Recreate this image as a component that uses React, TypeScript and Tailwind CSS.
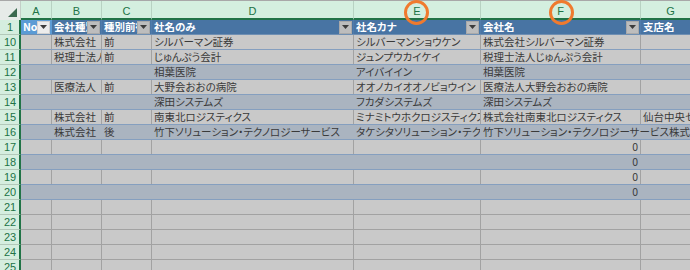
const FONT = "font-['Noto_Sans_CJK_JP','Noto_Sans',sans-serif] [font-feature-settings:'palt']";

type RowKind = 'light' | 'band' | 'plain'

interface IRow {
    n: string
    kind: RowKind
    cells: string[]
}

const W = ['w-[31px]', 'w-[50px]', 'w-[50px]', 'w-[202px]', 'w-[127px]', 'w-[160px]', 'w-[60px]']
const LETTERS = ['A', 'B', 'C', 'D', 'E', 'F', 'G']

const rows: IRow[] = [
    {n: '10', kind: 'light', cells: ['', '株式会社', '前', 'シルバーマン証券', 'シルバーマンショウケン', '株式会社シルバーマン証券', '']},
    {n: '11', kind: 'light', cells: ['', '税理士法人', '前', 'じゅんぷう会計', 'ジュンプウカイケイ', '税理士法人じゅんぷう会計', '']},
    {n: '12', kind: 'band', cells: ['', '', '', '相葉医院', 'アイバイイン', '相葉医院', '']},
    {n: '13', kind: 'light', cells: ['', '医療法人', '前', '大野会おおの病院', 'オオノカイオオノビョウイン', '医療法人大野会おおの病院', '']},
    {n: '14', kind: 'band', cells: ['', '', '', '深田システムズ', 'フカダシステムズ', '深田システムズ', '']},
    {n: '15', kind: 'light', cells: ['', '株式会社', '前', '南東北ロジスティクス', 'ミナミトウホクロジスティクス', '株式会社南東北ロジスティクス', '仙台中央センター']},
    {n: '16', kind: 'band', cells: ['', '株式会社', '後', '竹下ソリューション・テクノロジーサービス', 'タケシタソリューション・テクノロジーサービス', '竹下ソリューション・テクノロジーサービス株式会社', '']},
    {n: '17', kind: 'light', cells: ['', '', '', '', '', '0', '']},
    {n: '18', kind: 'band', cells: ['', '', '', '', '', '0', '']},
    {n: '19', kind: 'light', cells: ['', '', '', '', '', '0', '']},
    {n: '20', kind: 'band', cells: ['', '', '', '', '', '0', '']},
    {n: '21', kind: 'plain', cells: ['', '', '', '', '', '', '']},
    {n: '22', kind: 'plain', cells: ['', '', '', '', '', '', '']},
    {n: '23', kind: 'plain', cells: ['', '', '', '', '', '', '']},
    {n: '24', kind: 'plain', cells: ['', '', '', '', '', '', '']},
    {n: '25', kind: 'plain', cells: ['', '', '', '', '', '', '']},
]

const headers = ['No', '会社種別', '種別前後', '社名のみ', '社名カナ', '会社名', '支店名']

const rowStyle: Record<RowKind, string> = {
    light: 'bg-[#c9c9c9] border-b border-[#859fbf]',
    band: 'bg-[#aab4c0] border-b border-[#859fbf]',
    plain: 'bg-[#c9c9c9] border-b border-[#a2a2a2]',
}

const cellLine: Record<RowKind, string> = {
    light: 'border-r border-[#a2a2a2]',
    band: 'border-r border-transparent',
    plain: 'border-r border-[#a2a2a2]',
}

const FilterButton = ({active}: { active?: boolean }) => (
    <div className={`shrink-0 w-[13px] h-[13px] mr-[1px] flex items-center justify-center border ${active ? 'bg-[#ececec] border-[#d0d0d0]' : 'bg-[#bdbdbd] border-[#a9a9a9]'}`}>
        <svg width="7" height="4" viewBox="0 0 7 4">
            <polygon points="0,0 7,0 3.5,4" fill="#3c3c3c"/>
        </svg>
    </div>
)

const RowHead = ({n}: { n: string }) => (
    <div className="shrink-0 w-[21px] h-full bg-[#d5eedf] border-r-2 border-[#217346] border-b border-b-[#b3c9ba] flex items-center justify-center pl-[1px] text-[11px] leading-none text-[#217346] font-['Liberation_Sans',sans-serif]">
        {n}
    </div>
)

export default function App() {
    return (
        <div className={`relative w-[690px] h-[270px] overflow-hidden bg-[#c9c9c9] ${FONT}`}>
            <div className="flex h-[20px] border-t border-[#a8a8a8]">
                <div className="shrink-0 w-[21px] h-full bg-[#e6ebe8] border-r border-[#c3cfc7] relative">
                    <svg className="absolute right-[3px] bottom-[3px]" width="9" height="9" viewBox="0 0 9 9">
                        <polygon points="9,0 9,9 0,9" fill="#3b6a4f"/>
                    </svg>
                </div>
                {LETTERS.map((l, i) => (
                    <div key={l}
                         className={`shrink-0 ${W[i]} h-full bg-[#d4efdf] border-r border-[#b8d2c2] border-b-2 border-b-[#217346] flex items-center justify-center pt-[3px] text-[11px] leading-none text-[#217346] font-['Liberation_Sans',sans-serif]`}>
                        {l}
                    </div>
                ))}
            </div>

            <div className="flex h-[15px]">
                <RowHead n="1"/>
                <div className="flex bg-[#4874a3] border-b border-[#6f8fb3]">
                    {headers.map((h, i) => (
                        <div key={h}
                             className={`shrink-0 ${W[i]} h-full flex items-center border-r ${i === 0 ? 'bg-[#5b9bd5] border-[#5b9bd5]' : 'border-[#4f7bab]'}`}>
                            <span className="flex-1 min-w-0 overflow-hidden whitespace-nowrap pl-[2px] text-[10.5px] leading-none font-bold text-white">
                                {h}
                            </span>
                            {i < 6 && <FilterButton active={i === 0}/>}
                        </div>
                    ))}
                </div>
            </div>

            {rows.map(r => (
                <div key={r.n} className="flex h-[15px]">
                    <RowHead n={r.n}/>
                    <div className={`flex ${rowStyle[r.kind]}`}>
                        {r.cells.map((c, i) => (
                            <div key={i}
                                 className={`shrink-0 ${W[i]} h-full flex items-center whitespace-nowrap text-[10.5px] leading-none text-[#3a3a3a] ${cellLine[r.kind]} ${c === '0' ? 'justify-end pr-[2px]' : 'pl-[2px]'} ${r.n === '16' && i === 5 ? 'overflow-visible' : 'overflow-hidden'}`}>
                                {c}
                            </div>
                        ))}
                    </div>
                </div>
            ))}

            <div className="absolute top-[0px] left-[404px] w-[25px] h-[25px] rounded-full border-[3px] border-[#f07a2e]"/>
            <div className="absolute top-[0px] left-[549px] w-[25px] h-[25px] rounded-full border-[3px] border-[#f07a2e]"/>
        </div>
    )
}
